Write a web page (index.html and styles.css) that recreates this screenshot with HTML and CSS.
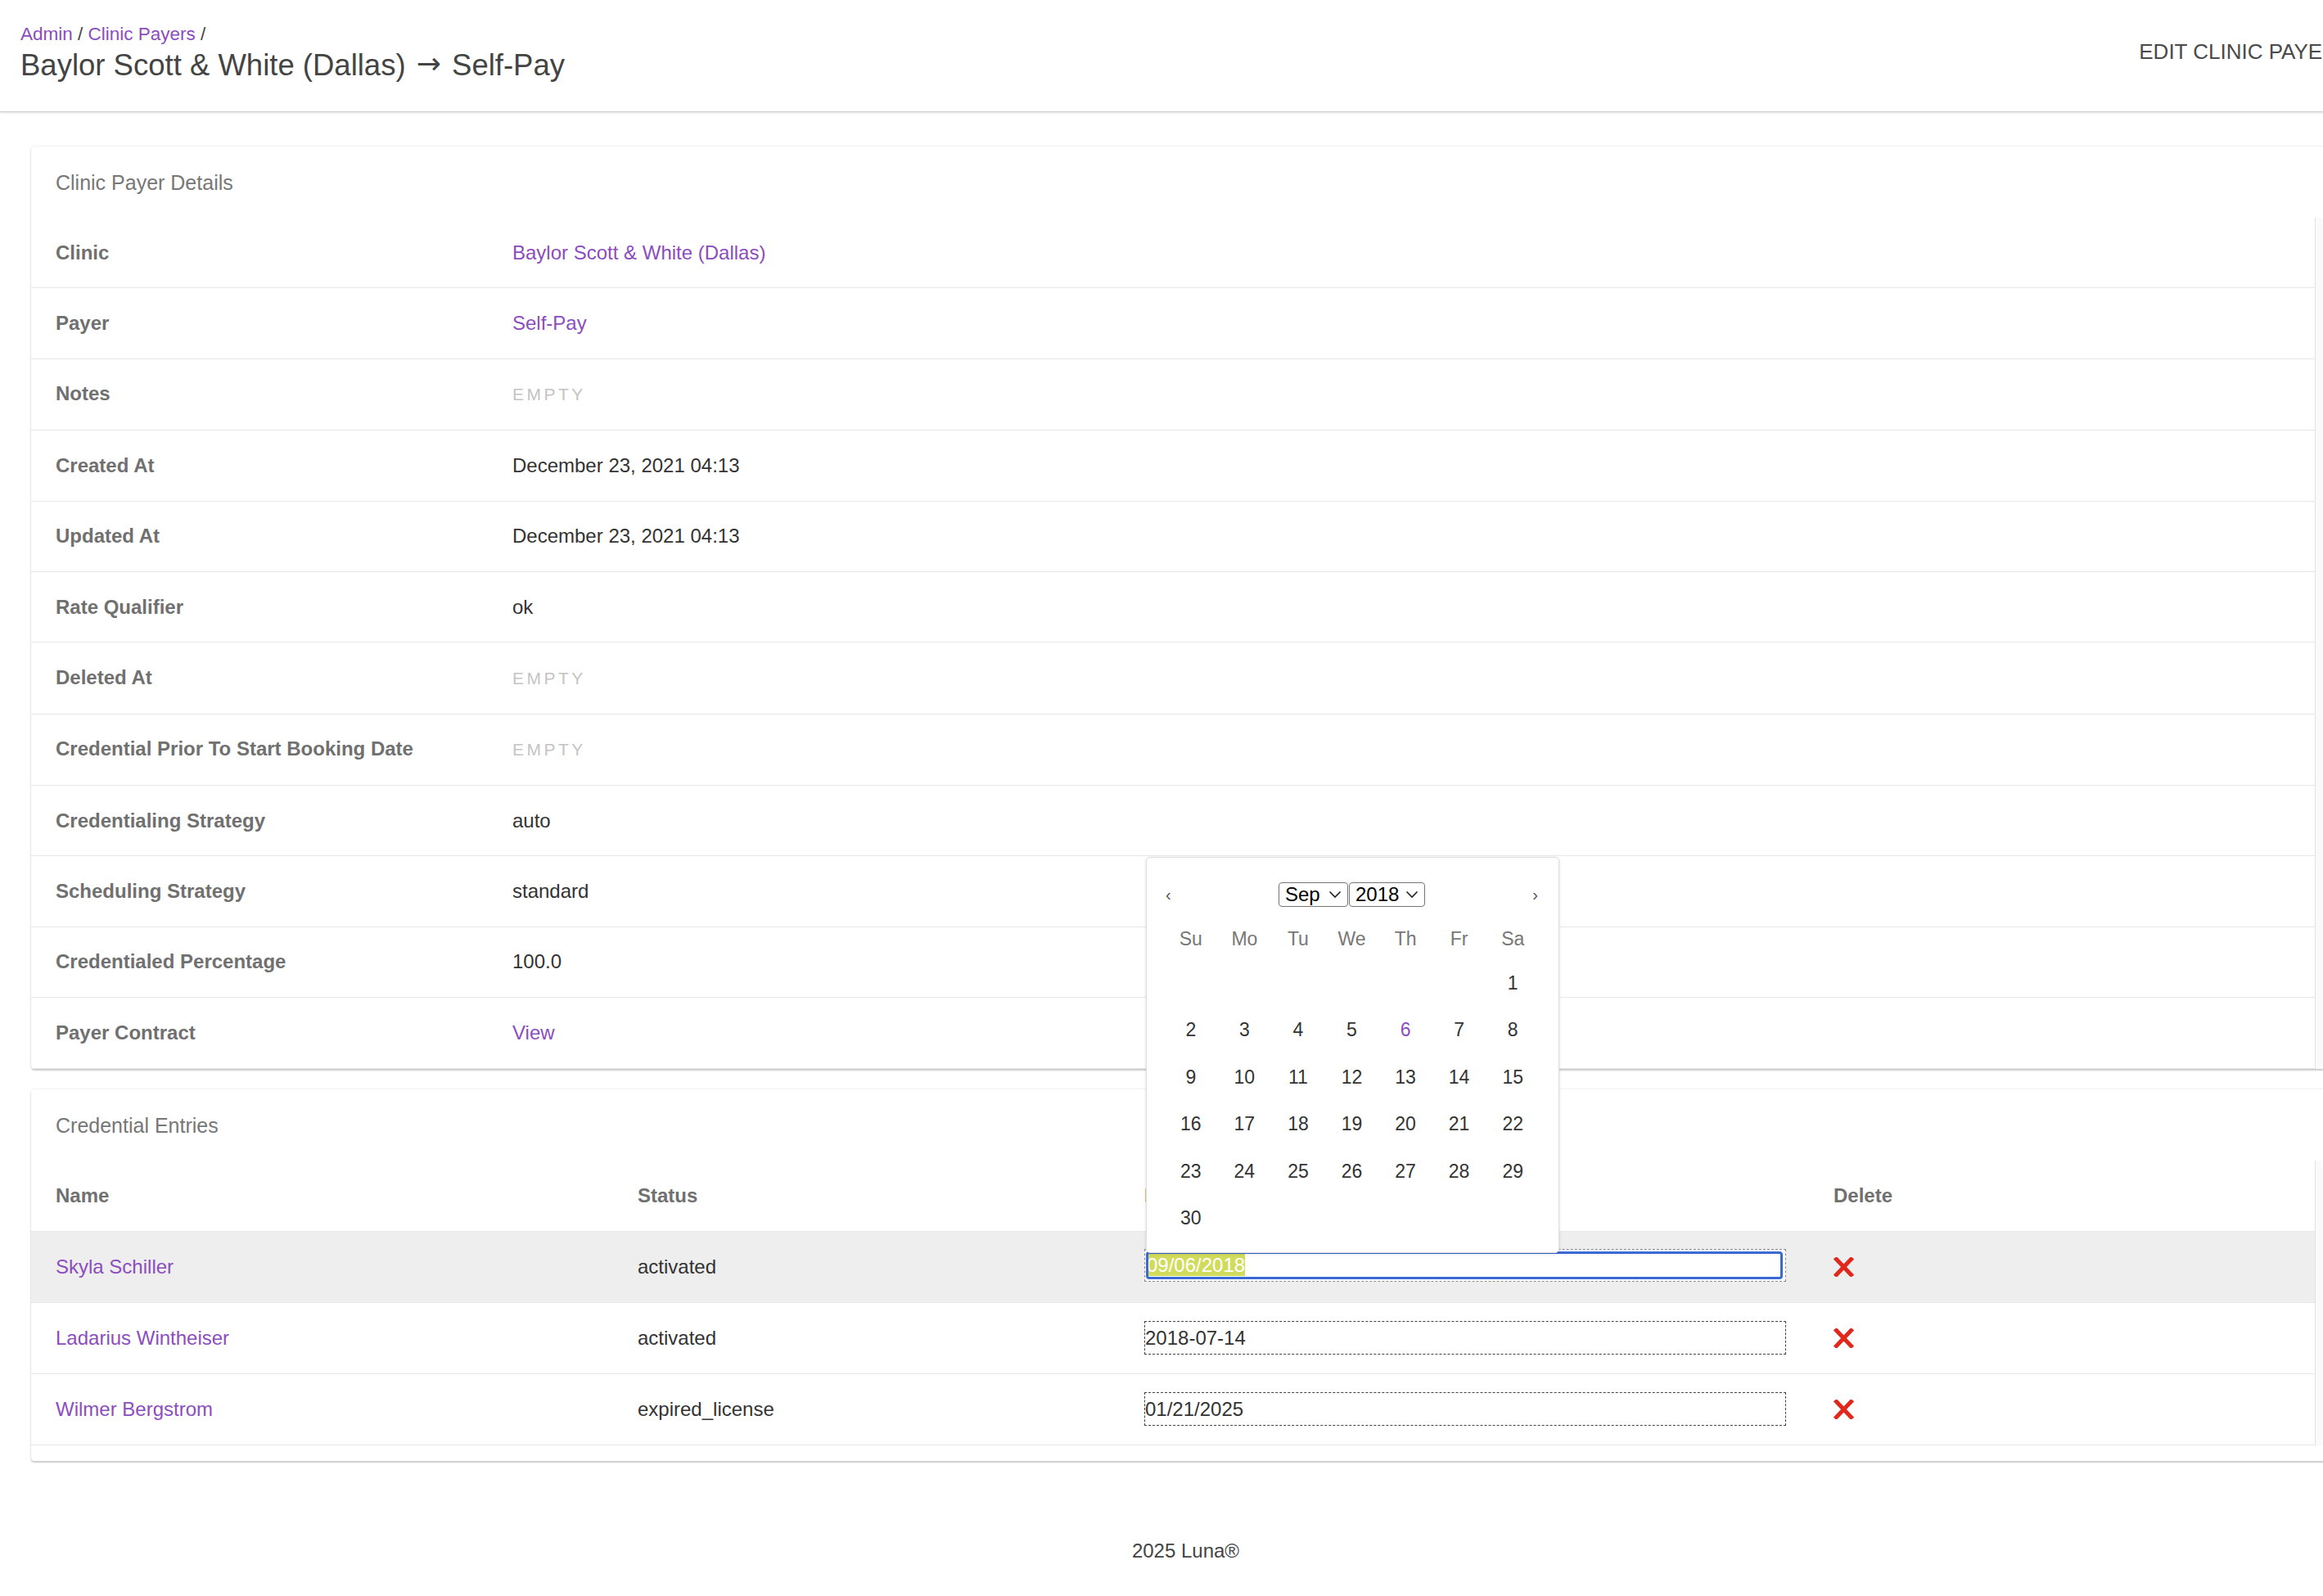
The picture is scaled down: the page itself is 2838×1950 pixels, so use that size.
FILE: index.html
```html
<!DOCTYPE html>
<html lang="en">
<head>
<meta charset="utf-8">
<title>Baylor Scott &amp; White (Dallas) → Self-Pay</title>
<link rel="stylesheet" href="styles.css">
</head>
<body>
<div class="page">
  <header class="topbar">
    <div class="titles">
      <nav class="crumbs"><a class="link">Admin</a> / <a class="link">Clinic Payers</a> /</nav>
      <h1 class="page-title">Baylor Scott &amp; White (Dallas) <span class="arrow">→</span> Self-Pay</h1>
    </div>
    <a class="edit-btn">Edit Clinic Payer</a>
  </header>

  <main class="main">
    <section class="card">
      <h2 class="card-title">Clinic Payer Details</h2>
      <div class="table-wrap">
        <div class="details">
          <div class="drow"><div class="dt">Clinic</div><div class="dd"><a class="link">Baylor Scott &amp; White (Dallas)</a></div></div>
          <div class="drow"><div class="dt">Payer</div><div class="dd"><a class="link">Self-Pay</a></div></div>
          <div class="drow"><div class="dt">Notes</div><div class="dd"><span class="empty">Empty</span></div></div>
          <div class="drow"><div class="dt">Created At</div><div class="dd">December 23, 2021 04:13</div></div>
          <div class="drow"><div class="dt">Updated At</div><div class="dd">December 23, 2021 04:13</div></div>
          <div class="drow"><div class="dt">Rate Qualifier</div><div class="dd">ok</div></div>
          <div class="drow"><div class="dt">Deleted At</div><div class="dd"><span class="empty">Empty</span></div></div>
          <div class="drow"><div class="dt">Credential Prior To Start Booking Date</div><div class="dd"><span class="empty">Empty</span></div></div>
          <div class="drow"><div class="dt">Credentialing Strategy</div><div class="dd">auto</div></div>
          <div class="drow"><div class="dt">Scheduling Strategy</div><div class="dd">standard</div></div>
          <div class="drow"><div class="dt">Credentialed Percentage</div><div class="dd">100.0</div></div>
          <div class="drow"><div class="dt">Payer Contract</div><div class="dd"><a class="link">View</a></div></div>
        </div>
        <div class="track"></div>
      </div>
    </section>

    <section class="card card-entries">
      <h2 class="card-title">Credential Entries</h2>
      <div class="table-wrap">
        <div class="entries">
          <div class="erow ehead">
            <div class="cell">Name</div>
            <div class="cell">Status</div>
            <div class="cell">Effective Date</div>
            <div class="cell">Delete</div>
          </div>
          <div class="erow active">
            <div class="cell"><a class="link">Skyla Schiller</a></div>
            <div class="cell">activated</div>
            <div class="cell date-cell">
              <div class="date-input focused">
                <span class="selected">09/06/2018</span>
                <span class="focus-ring"></span>
                <div class="calendar">
                  <div class="cal-nav">
                    <span class="cal-arrow">‹</span>
                    <div class="cal-selects">
                      <div class="sel sel-month"><span>Sep</span><svg class="chev" width="16" height="10" viewBox="0 0 16 10"><polyline points="1.5,1.5 8,8 14.5,1.5" fill="none" stroke="#222" stroke-width="1.6"/></svg></div>
                      <div class="sel sel-year"><span>2018</span><svg class="chev" width="16" height="10" viewBox="0 0 16 10"><polyline points="1.5,1.5 8,8 14.5,1.5" fill="none" stroke="#222" stroke-width="1.6"/></svg></div>
                    </div>
                    <span class="cal-arrow">›</span>
                  </div>
                  <div class="cal-week">
                    <span>Su</span><span>Mo</span><span>Tu</span><span>We</span><span>Th</span><span>Fr</span><span>Sa</span>
                  </div>
                  <div class="cal-days">
                    <span></span><span></span><span></span><span></span><span></span><span></span><span>1</span>
                    <span>2</span><span>3</span><span>4</span><span>5</span><span class="today">6</span><span>7</span><span>8</span>
                    <span>9</span><span>10</span><span>11</span><span>12</span><span>13</span><span>14</span><span>15</span>
                    <span>16</span><span>17</span><span>18</span><span>19</span><span>20</span><span>21</span><span>22</span>
                    <span>23</span><span>24</span><span>25</span><span>26</span><span>27</span><span>28</span><span>29</span>
                    <span>30</span>
                  </div>
                </div>
              </div>
            </div>
            <div class="cell"><svg class="xicon" width="25" height="24" viewBox="0 0 25 24"><path d="M3.5 2.5 L21.5 21.5 M21.5 2.5 L3.5 21.5" stroke="#e0281c" stroke-width="5" stroke-linecap="square" fill="none"/></svg></div>
          </div>
          <div class="erow">
            <div class="cell"><a class="link">Ladarius Wintheiser</a></div>
            <div class="cell">activated</div>
            <div class="cell date-cell"><div class="date-input">2018-07-14</div></div>
            <div class="cell"><svg class="xicon" width="25" height="24" viewBox="0 0 25 24"><path d="M3.5 2.5 L21.5 21.5 M21.5 2.5 L3.5 21.5" stroke="#e0281c" stroke-width="5" stroke-linecap="square" fill="none"/></svg></div>
          </div>
          <div class="erow">
            <div class="cell"><a class="link">Wilmer Bergstrom</a></div>
            <div class="cell">expired_license</div>
            <div class="cell date-cell"><div class="date-input">01/21/2025</div></div>
            <div class="cell"><svg class="xicon" width="25" height="24" viewBox="0 0 25 24"><path d="M3.5 2.5 L21.5 21.5 M21.5 2.5 L3.5 21.5" stroke="#e0281c" stroke-width="5" stroke-linecap="square" fill="none"/></svg></div>
          </div>
        </div>
        <div class="track"></div>
      </div>
    </section>
  </main>

  <footer class="footer">2025 Luna®</footer>
</div>
</body>
</html>
```

FILE: styles.css
```css
html, body {
  margin: 0;
  padding: 0;
  overflow: hidden;
  background: #fff;
}

body {
  font-family: "Liberation Sans", Arial, Helvetica, sans-serif;
  font-size: 24px;
  line-height: 36px;
  color: #333;
}

.page {
  width: 2897px;
}

.link {
  color: #8b4dbf;
  text-decoration: none;
}

/* Header */
.topbar {
  display: flex;
  justify-content: space-between;
  align-items: flex-start;
  height: 137px;
  box-sizing: border-box;
  padding: 27px 41px 0 25px;
  border-bottom: 1px solid #cfcfcf;
  box-shadow: 0 1px 3px rgba(0, 0, 0, 0.12);
  background: #fff;
}

.crumbs {
  font-size: 22.5px;
  line-height: 30px;
  color: #444;
}

.page-title {
  margin: 1px 0 0 0;
  font-size: 36.5px;
  line-height: 44px;
  font-weight: normal;
  color: #444;
}

.arrow {
  font-family: "DejaVu Sans", sans-serif;
  font-size: 36px;
  margin: 0 3px;
  position: relative;
  top: -2px;
}

.edit-btn {
  font-size: 26px;
  line-height: 36px;
  color: #4a4a4a;
  text-transform: uppercase;
  margin-top: 17.5px;
  white-space: nowrap;
}

/* Main */
.main {
  padding: 42px 38px 0 38px;
  display: flex;
  flex-direction: column;
  gap: 25px;
}

.card {
  background: #fff;
  border-radius: 4px;
  box-shadow: 0 0 3px rgba(0, 0, 0, 0.12), 0 2px 2px rgba(0, 0, 0, 0.18);
}

.card-entries {
  padding-bottom: 19px;
}

.card-title {
  margin: 0;
  padding: 26px 30px 25px 30px;
  font-size: 25px;
  line-height: 36px;
  font-weight: normal;
  color: #777;
}

.table-wrap {
  display: flex;
}

.track {
  width: 30px;
  flex: none;
  border-left: 1px solid #e2e2e2;
  background: #fafafa;
}

/* Details list */
.details {
  flex: 1;
}

.drow {
  display: grid;
  grid-template-columns: 558px 1fr;
  border-bottom: 1px solid #e8e8e8;
}

.dt, .dd {
  padding: 24.7px 30px;
  line-height: 36px;
}

.dt {
  font-weight: bold;
  color: #707070;
}

.dd {
  color: #333;
}

.empty {
  font-size: 21px;
  letter-spacing: 3.5px;
  text-transform: uppercase;
  color: #c4c4c4;
}

/* Entries table */
.entries {
  flex: 1;
}

.erow {
  display: grid;
  grid-template-columns: 711px 619px 842px 1fr;
  border-bottom: 1px solid #e8e8e8;
}

.erow.active {
  background: #eeeeee;
}

.cell {
  padding: 25px 30px;
  line-height: 36px;
  display: flex;
  align-items: center;
}

.ehead .cell {
  font-weight: bold;
  color: #707070;
}

.date-cell {
  padding: 22.5px 28px 22.5px 30px;
}

.date-input {
  position: relative;
  width: 100%;
  height: 41px;
  box-sizing: border-box;
  border: 1px dashed #444;
  line-height: 39px;
  font-size: 24px;
  color: #333;
  padding-left: 0;
}

.date-input.focused {
  height: 40px;
  margin: -1px 0 2px 0;
  border-color: #8a8a8a;
  padding-left: 2px;
  line-height: 38px;
  background: #fff;
}

.selected {
  background: #d2dc5c;
  color: #fff;
}

.focus-ring {
  position: absolute;
  left: 1px;
  top: 2px;
  right: 3px;
  bottom: 2px;
  border: 3px solid #3a69d4;
  border-radius: 4px;
  pointer-events: none;
}

.xicon {
  display: block;
}

/* Calendar popup */
.calendar {
  position: absolute;
  left: 1px;
  bottom: 34px;
  width: 505px;
  height: 484px;
  box-sizing: border-box;
  padding: 30px 23px 15px 21px;
  background: #fff;
  border: 1px solid #dedede;
  border-radius: 5px;
  box-shadow: 0 1px 4px rgba(0, 0, 0, 0.12);
  z-index: 10;
  font-size: 23px;
  line-height: 30px;
  color: #333;
}

.cal-nav {
  display: flex;
  justify-content: space-between;
  align-items: center;
  height: 30px;
}

.cal-arrow {
  font-size: 20px;
  color: #555;
  padding: 0 2px;
}

.cal-selects {
  display: flex;
  gap: 1px;
}

.sel {
  display: flex;
  align-items: center;
  justify-content: space-between;
  height: 30px;
  box-sizing: border-box;
  padding: 0 7px;
  border: 1px solid #767676;
  border-radius: 4px;
  color: #000;
  font-size: 24px;
}

.sel-month {
  width: 85px;
}

.sel-year {
  width: 93px;
}

.cal-week, .cal-days {
  display: grid;
  grid-template-columns: repeat(7, 1fr);
  text-align: center;
}

.cal-week {
  margin-top: 14px;
  height: 50px;
  align-items: center;
  color: #777;
}

.cal-days {
  grid-auto-rows: 57.5px;
  align-items: center;
}

.today {
  color: #8b4dbf;
}

/* Footer */
.footer {
  padding-top: 92px;
  text-align: center;
  color: #444;
  font-size: 24px;
  line-height: 36px;
}
```
